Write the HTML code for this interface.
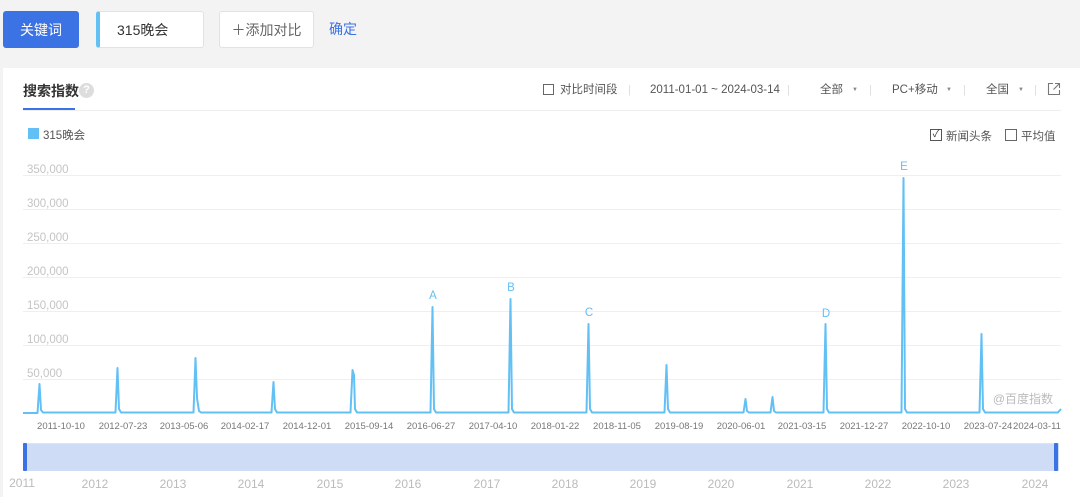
<!DOCTYPE html>
<html><head><meta charset="utf-8"><style>
*{margin:0;padding:0;box-sizing:border-box}
body{width:1080px;height:497px;background:#f3f3f3;font-family:"Liberation Sans","Noto Sans CJK SC",sans-serif;position:relative;overflow:hidden;color:#333}
.a{position:absolute}
.btn{position:absolute;top:11px;height:37px;border-radius:3px;font-size:14px;display:flex;align-items:center;justify-content:center}
.t{position:absolute;top:82px;height:16px;line-height:16px;font-size:11.5px;color:#555;white-space:pre}
.s{position:absolute;top:82px;height:16px;line-height:16px;font-size:11px;color:#ddd}
.tr{position:absolute;top:82px;height:16px;line-height:16px;font-size:6px;color:#888}
</style></head><body>
<div class="btn" style="left:3px;width:76px;background:#3b72e4;color:#fff">关键词</div>
<div class="btn" style="left:96px;width:108px;background:#fff;border:1px solid #e2e2e2;border-left:4px solid #63c0f5;justify-content:flex-start;padding-left:17px;color:#333">315晚会</div>
<div class="btn" style="left:219px;width:95px;background:#fff;border:1px solid #e2e2e2;color:#666">＋添加对比</div>
<div class="a" style="left:329px;top:19px;font-size:14px;color:#3b72e4">确定</div>
<div class="a" style="left:3px;top:68px;width:1077px;height:429px;background:#fff"></div>
<div class="a" style="left:23px;top:81px;font-size:14px;font-weight:bold;color:#333">搜索指数</div>
<div class="a" style="left:79px;top:83px;width:15px;height:15px;border-radius:50%;background:#ddd;color:#fff;font-size:11px;text-align:center;line-height:15px;font-weight:bold">?</div>
<div class="a" style="left:23px;top:108px;width:52px;height:2px;background:#3b72e4"></div>
<div class="a" style="left:23px;top:110px;width:1038px;height:1px;background:#eee"></div>
<div class="a" style="left:543px;top:84px;width:11px;height:11px;border:1px solid #666"></div>
<div class="t" style="left:560px">对比时间段</div>
<div class="s" style="left:628px">|</div>
<div class="t" style="left:650px">2011-01-01 ~ 2024-03-14</div>
<div class="s" style="left:787px">|</div>
<div class="t" style="left:820px">全部</div><div class="tr" style="left:852px">▼</div>
<div class="s" style="left:869px">|</div>
<div class="t" style="left:892px">PC+移动</div><div class="tr" style="left:946px">▼</div>
<div class="s" style="left:963px">|</div>
<div class="t" style="left:986px">全国</div><div class="tr" style="left:1018px">▼</div>
<div class="s" style="left:1034px">|</div>
<svg class="a" style="left:1047px;top:82px" width="14" height="14" viewBox="0 0 14 14"><path d="M6 1.5H1.5V12.5H12.5V8M8 1.5H12.5V6M12.5 1.5L6.5 7.5" fill="none" stroke="#777" stroke-width="1.1"/></svg>
<div class="a" style="left:28px;top:128px;width:11px;height:11px;background:#63c0f5"></div>
<div class="a" style="left:43px;top:127px;font-size:11.5px;color:#555">315晚会</div>
<div class="a" style="left:930px;top:129px;width:12px;height:12px;border:1px solid #555;font-size:10px;line-height:10px;text-align:center;color:#333">✓</div>
<div class="a" style="left:946px;top:128px;font-size:11.5px;color:#555">新闻头条</div>
<div class="a" style="left:1005px;top:129px;width:12px;height:12px;border:1px solid #666"></div>
<div class="a" style="left:1021px;top:128px;font-size:11.5px;color:#555">平均值</div>
<svg class="a" style="left:0;top:150px" width="1080" height="347">
<g stroke="#efefef" stroke-width="1"><line x1="23" x2="1061" y1="25.5" y2="25.5"/><line x1="23" x2="1061" y1="59.5" y2="59.5"/><line x1="23" x2="1061" y1="93.5" y2="93.5"/><line x1="23" x2="1061" y1="127.5" y2="127.5"/><line x1="23" x2="1061" y1="161.5" y2="161.5"/><line x1="23" x2="1061" y1="195.5" y2="195.5"/><line x1="23" x2="1061" y1="229.5" y2="229.5"/></g>
<g fill="#c4c4c4" font-size="11.5" font-family="Liberation Sans,sans-serif"><text x="27" y="23">350,000</text><text x="27" y="57">300,000</text><text x="27" y="91">250,000</text><text x="27" y="125">200,000</text><text x="27" y="159">150,000</text><text x="27" y="193">100,000</text><text x="27" y="227">50,000</text></g>
<path fill="none" stroke="#63c0f5" stroke-width="2" stroke-linejoin="round" d="M23 263 L37.5 263 L39.5 234 L41 260 L43 262.5 L115.5 262.5 L117.5 218 L119 259 L121 262.5 L193.5 262.5 L195.5 208 L197 248 L199 261 L201 262.5 L271.5 262.5 L273.5 232 L275 259 L277 262.5 L350.5 262.5 L352.5 220 L354 225 L355 259 L357 262.5 L430.5 262.5 L432.5 157 L434 259 L436 262.5 L508.5 262.5 L510.5 149 L512 259 L514 262.5 L586.5 262.5 L588.5 174 L590 259 L592 262.5 L664.5 262.5 L666.5 215 L668 259 L670 262.5 L743.5 262.5 L745.5 249 L747 261 L749 262.5 L770.5 262.5 L772.5 247 L774 261 L776 262.5 L823.5 262.5 L825.5 174 L827 259 L829 262.5 L901.5 262.5 L903.5 28 L905 259 L907 262.5 L979.5 262.5 L981.5 184 L983 259 L985 262.5 L1058 262.5 L1061 259"/>
<g fill="#63c0f5" font-size="11.5" font-family="Liberation Sans,sans-serif" text-anchor="middle"><text x="433" y="149">A</text><text x="511" y="141">B</text><text x="589" y="166">C</text><text x="826" y="167">D</text><text x="904" y="20">E</text></g>
<text x="1053" y="253" fill="#bbb" font-size="12" text-anchor="end" font-family="Liberation Sans,Noto Sans CJK SC,sans-serif">@百度指数</text>
<g fill="#777" font-size="9.5" font-family="Liberation Sans,sans-serif" text-anchor="middle"><text x="61" y="279">2011-10-10</text><text x="123" y="279">2012-07-23</text><text x="184" y="279">2013-05-06</text><text x="245" y="279">2014-02-17</text><text x="307" y="279">2014-12-01</text><text x="369" y="279">2015-09-14</text><text x="431" y="279">2016-06-27</text><text x="493" y="279">2017-04-10</text><text x="555" y="279">2018-01-22</text><text x="617" y="279">2018-11-05</text><text x="679" y="279">2019-08-19</text><text x="741" y="279">2020-06-01</text><text x="802" y="279">2021-03-15</text><text x="864" y="279">2021-12-27</text><text x="926" y="279">2022-10-10</text><text x="988" y="279">2023-07-24</text><text x="1037" y="279">2024-03-11</text></g>
<rect x="23" y="293" width="1036" height="28" fill="#cfdcf6"/>
<line x1="23" x2="1059" y1="293.5" y2="293.5" stroke="#e3e3e3"/>
<rect x="23" y="293" width="4" height="28" rx="1" fill="#3b72e4"/>
<rect x="1054" y="293" width="4" height="28" rx="1" fill="#3b72e4"/>
<g fill="#bbb" font-size="12" font-family="Liberation Sans,sans-serif" text-anchor="middle"><text x="22" y="337">2011</text><text x="95" y="338">2012</text><text x="173" y="338">2013</text><text x="251" y="338">2014</text><text x="330" y="338">2015</text><text x="408" y="338">2016</text><text x="487" y="338">2017</text><text x="565" y="338">2018</text><text x="643" y="338">2019</text><text x="721" y="338">2020</text><text x="800" y="338">2021</text><text x="878" y="338">2022</text><text x="956" y="338">2023</text><text x="1035" y="338">2024</text></g>
</svg>
</body></html>
